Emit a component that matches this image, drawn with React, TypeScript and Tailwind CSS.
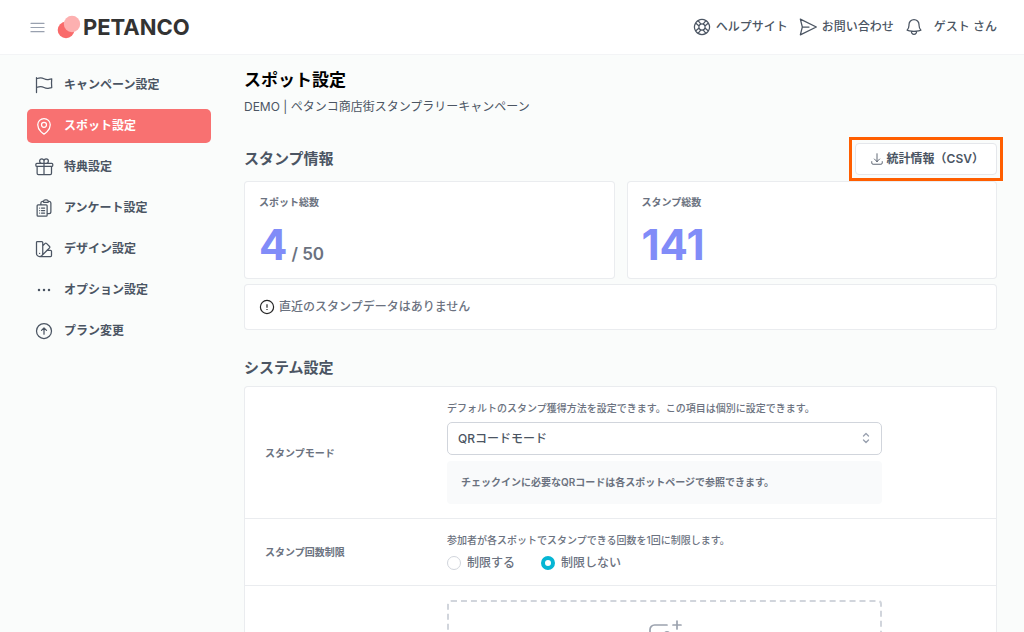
import React, { useState } from 'react';
import type { IconType } from 'react-icons';
import {
  HiOutlineArrowDownTray,
  HiOutlineArrowUpCircle,
  HiOutlineBars3,
  HiOutlineBell,
  HiOutlineChevronUpDown,
  HiOutlineClipboardDocumentList,
  HiOutlineEllipsisHorizontal,
  HiOutlineFlag,
  HiOutlineGift,
  HiOutlineLifebuoy,
  HiOutlineMapPin,
  HiOutlineSwatch,
} from 'react-icons/hi2';

interface MenuItem {
  label: string;
  icon: IconType;
}

const menu: MenuItem[] = [
  { label: 'キャンペーン設定', icon: HiOutlineFlag },
  { label: 'スポット設定', icon: HiOutlineMapPin },
  { label: '特典設定', icon: HiOutlineGift },
  { label: 'アンケート設定', icon: HiOutlineClipboardDocumentList },
  { label: 'デザイン設定', icon: HiOutlineSwatch },
  { label: 'オプション設定', icon: HiOutlineEllipsisHorizontal },
  { label: 'プラン変更', icon: HiOutlineArrowUpCircle },
];

const cardStyle = 'bg-white border border-gray-200/80 rounded';
const statLabel = 'text-[10px] leading-[14px] font-semibold text-[#6b7280]';
const statValue = 'text-[42px] leading-[48px] font-bold text-[#818cf8]';
const sectionTitle = 'text-[15px] leading-5 font-semibold text-[#4b5563]';
const rowStyle = 'flex items-center px-5 py-[14px]';
const rowLabel = 'w-[182px] shrink-0 text-[10px] leading-[14px] font-semibold text-[#6b7280]';
const rowHelp = 'text-[10px] leading-[14px] font-medium text-[#6b7280]';
const radioStyle =
  'appearance-none size-[14px] rounded-full border border-gray-300 bg-white checked:border-4 checked:border-[#06b6d4]';

const Logo = () => (
  <a href="#" className="flex items-center gap-[2px]">
    <svg viewBox="0 0 24 24" className="size-6" aria-hidden="true">
      <circle cx="9" cy="15" r="8.3" fill="#f96a6a" />
      <circle cx="15" cy="9" r="8.2" fill="#fdb0b0" />
    </svg>
    <span className="text-[22px] leading-6 font-bold text-[#333]">PETANCO</span>
  </a>
);

const SendIcon = () => (
  <svg viewBox="0 0 24 24" className="size-5" fill="none" stroke="currentColor" strokeWidth="1.5" strokeLinecap="round" strokeLinejoin="round" aria-hidden="true">
    <path d="M5.2 12 2.8 2.6 22 12 2.8 21.4 5.2 12Zm0 0h8" />
  </svg>
);

const AlertIcon = () => (
  <svg viewBox="0 0 16 16" className="size-4" fill="none" stroke="#262626" aria-hidden="true">
    <circle cx="8" cy="8" r="6.6" strokeWidth="1.2" />
    <path d="M8 5.2v3.6M8 10v1" strokeWidth="1.2" />
  </svg>
);

const ImageAddIcon = () => (
  <svg viewBox="0 0 36 36" className="size-9" fill="none" stroke="#9ca3af" strokeWidth="1.7" strokeLinecap="round" aria-hidden="true">
    <path d="M20 6H7.5A4.5 4.5 0 0 0 3 10.5v17A4.5 4.5 0 0 0 7.5 32h20a4.5 4.5 0 0 0 4.500-4.500V15" />
    <path d="M30 2v8M26 6h8" />
    <circle cx="20" cy="15" r="2.2" />
    <path d="m3 26 6-6 11 12M18 29l5-5 9 7" />
  </svg>
);

const App: React.FC = () => {
  const [active, setActive] = useState('スポット設定');
  const [mode, setMode] = useState('qr');
  const [limit, setLimit] = useState('off');

  return (
    <div className="min-h-screen bg-[#fafcfb] text-[#4b5563] font-['Inter','Noto_Sans_CJK_JP',sans-serif]">
      <header className="flex items-center justify-between h-[55px] pl-7 pr-[27px] bg-white border-b border-gray-100">
        <div className="flex items-center gap-[10px]">
          <button type="button" aria-label="メニュー" className="text-gray-400">
            <HiOutlineBars3 className="size-[19px]" />
          </button>
          <Logo />
        </div>
        <nav className="flex items-center gap-[10px] text-xs font-medium">
          <a href="#" className="flex items-center gap-1">
            <HiOutlineLifebuoy className="size-5" />
            ヘルプサイト
          </a>
          <a href="#" className="flex items-center gap-1">
            <SendIcon />
            お問い合わせ
          </a>
          <button type="button" aria-label="通知">
            <HiOutlineBell className="size-5" />
          </button>
          <span>ゲスト さん</span>
        </nav>
      </header>

      <div className="flex items-start gap-[33px] px-[27px] pt-[13px]">
        <nav className="flex flex-col gap-[7px] w-[184px] shrink-0">
          {menu.map(({ label, icon: Icon }) => (
            <a
              key={label}
              href="#"
              onClick={() => setActive(label)}
              className={
                'flex items-center gap-[10px] h-[34px] px-[7px] rounded-[5px] text-xs font-semibold ' +
                (active === label ? 'bg-[#f87171] text-white' : 'text-[#4b5563]')
              }
            >
              <Icon className="size-5" />
              {label}
            </a>
          ))}
        </nav>

        <main className="flex-1 min-w-0">
          <h1 className="text-[17px] leading-6 font-semibold text-black">スポット設定</h1>
          <p className="mt-[6px] text-xs leading-[18px]">DEMO | ペタンコ商店街スタンプラリーキャンペーン</p>

          <div className="flex items-center justify-between mt-[27px]">
            <h2 className={sectionTitle}>スタンプ情報</h2>
            <div className="outline-[3px] outline-solid outline-[#ff5e00] outline-offset-[3px]">
              <button
                type="button"
                className="flex items-center gap-[3px] h-8 pl-[14px] pr-3 bg-white border border-gray-200 rounded text-xs font-semibold"
              >
                <HiOutlineArrowDownTray className="size-[14px]" />
                統計情報（CSV）
              </button>
            </div>
          </div>

          <div className="grid grid-cols-2 gap-3 mt-[6px]">
            <div className={cardStyle + ' h-[98px] px-[14px] pt-[13px]'}>
              <p className={statLabel}>スポット総数</p>
              <p className="flex items-baseline gap-1 mt-3">
                <span className={statValue}>4</span>
                <span className="text-[17px] font-semibold text-[#6b7280]">/ 50</span>
              </p>
            </div>
            <div className={cardStyle + ' h-[98px] px-[14px] pt-[13px]'}>
              <p className={statLabel}>スタンプ総数</p>
              <p className={statValue + ' mt-3'}>141</p>
            </div>
          </div>

          <div className={cardStyle + ' flex items-center gap-1 h-[46px] mt-[5px] px-[14px] text-xs font-medium text-[#6b7280]'}>
            <AlertIcon />
            直近のスタンプデータはありません
          </div>

          <h2 className={sectionTitle + ' mt-7'}>システム設定</h2>

          <div className={cardStyle + ' mt-2 divide-y divide-gray-200/80'}>
            <div className={rowStyle}>
              <label htmlFor="mode" className={rowLabel}>スタンプモード</label>
              <div className="flex-1 max-w-[435px]">
                <p className={rowHelp}>デフォルトのスタンプ獲得方法を設定できます。この項目は個別に設定できます。</p>
                <div className="relative mt-[7px]">
                  <select
                    id="mode"
                    value={mode}
                    onChange={e => setMode(e.target.value)}
                    className="appearance-none w-full h-[33px] px-[10px] bg-white border border-gray-300 rounded-[5px] text-xs font-medium"
                  >
                    <option value="qr">QRコードモード</option>
                    <option value="gps">GPSモード</option>
                  </select>
                  <HiOutlineChevronUpDown strokeWidth={2} className="absolute right-2 top-2 size-4 text-gray-400 pointer-events-none" />
                </div>
                <p className="mt-[6px] px-[14px] py-[14px] bg-gray-50 rounded-sm text-[10px] leading-[15px] font-semibold text-[#6b7280]">
                  チェックインに必要なQRコードは各スポットページで参照できます。
                </p>
              </div>
            </div>

            <div className={rowStyle} role="radiogroup" aria-labelledby="limit-label">
              <p id="limit-label" className={rowLabel}>スタンプ回数制限</p>
              <div className="flex-1 max-w-[435px]">
                <p className={rowHelp}>参加者が各スポットでスタンプできる回数を1回に制限します。</p>
                <div className="flex gap-[26px] mt-2 text-xs font-medium text-[#6b7280]">
                  <label className="flex items-center gap-[6px]">
                    <input type="radio" name="limit" checked={limit === 'on'} onChange={() => setLimit('on')} className={radioStyle} />
                    制限する
                  </label>
                  <label className="flex items-center gap-[6px]">
                    <input type="radio" name="limit" checked={limit === 'off'} onChange={() => setLimit('off')} className={radioStyle} />
                    制限しない
                  </label>
                </div>
              </div>
            </div>

            <div className={rowStyle}>
              <div className="w-[182px] shrink-0" />
              <button
                type="button"
                aria-label="画像を追加"
                className="flex flex-1 justify-center max-w-[435px] h-[120px] pt-[17px] border-2 border-dashed border-gray-300 rounded"
              >
                <ImageAddIcon />
              </button>
            </div>
          </div>
        </main>
      </div>
    </div>
  );
};

export default App;
